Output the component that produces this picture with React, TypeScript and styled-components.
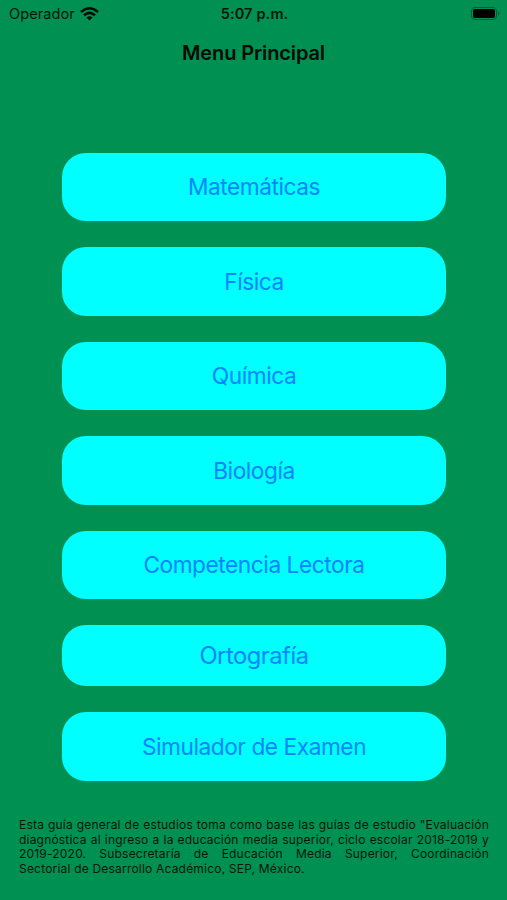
import React from "react";
import styled, { createGlobalStyle } from "styled-components";

const Global = createGlobalStyle`
  * { box-sizing: border-box; }
  body { margin: 0; background: #009051; font-family: Inter, sans-serif; }
`;
const Screen = styled.div`
  width: 507px; height: 900px; background: #009051; color: #00160b;
  display: flex; flex-direction: column; overflow: hidden;
`;
const StatusBar = styled.header`
  height: 27px; flex: none; padding: 0 7px 0 9px; display: grid;
  grid-template-columns: 1fr auto 1fr; align-items: center; font-size: 14.5px;
`;
const Carrier = styled.div`display: flex; align-items: center; gap: 5px; letter-spacing: 0.1px;`;
const Clock = styled.time`font-weight: 600; letter-spacing: 0.15px;`;
const Battery = styled.svg`justify-self: end;`;
const NavBar = styled.h1`
  margin: 0; height: 51px; flex: none; display: flex; align-items: center; justify-content: center;
  font-size: 20px; font-weight: 600; letter-spacing: -0.12px; color: #000b05;
`;
const Menu = styled.nav`
  margin-top: 74.5px; padding: 0 61px 0 62px; display: flex; flex-direction: column; gap: 26px;
`;
const MenuButton = styled.button<{ $height?: number; $size?: number }>`
  height: ${(p) => p.$height ?? 68.5}px; border: 0; border-radius: 24px; padding: 0;
  background: #00ffff; color: #0084ff; font-family: inherit;
  font-size: ${(p) => p.$size ?? 22.7}px; letter-spacing: -0.45px;
`;
const Note = styled.footer`
  margin: 37.5px 18px 0 19px; font-size: 12px; line-height: 14.5px; letter-spacing: 0.2px;
`;
const Line = styled.div<{ $last?: boolean }>`
  text-align: justify; text-align-last: ${(p) => (p.$last ? "left" : "justify")}; white-space: nowrap;
`;

const items = [
  { label: "Matemáticas" }, { label: "Física" }, { label: "Química" }, { label: "Biología" },
  { label: "Competencia Lectora" }, { label: "Ortografía", height: 61, size: 23.7 },
  { label: "Simulador de Examen" },
];
const note = [
  "Esta guía general de estudios toma como base las guías de estudio \"Evaluación",
  "diagnóstica al ingreso a la educación media superior, ciclo escolar 2018-2019 y",
  "2019-2020. Subsecretaría de Educación Media Superior, Coordinación",
  "Sectorial de Desarrollo Académico, SEP, México.",
];

export default function App() {
  return (
    <Screen>
      <Global />
      <StatusBar>
        <Carrier>Operador
          <svg width="19" height="14" viewBox="0 0 19 14" fill="none" stroke="#000b05" strokeWidth="2.5">
            <path d="M1 5Q9.5-2.5 18 5M4 8.2Q9.5 3.5 15 8.2" /><path d="M6.5 10.4Q9.5 8 12.5 10.4L9.5 13.5Z" fill="#000b05" stroke="none" />
          </svg>
        </Carrier>
        <Clock>5:07 p.m.</Clock>
        <Battery width="29" height="13" viewBox="0 0 29 13">
          <rect x=".5" y=".5" width="25" height="12" rx="3.5" fill="none" stroke="#005c34" />
          <rect x="2" y="2" width="22" height="9" rx="2" fill="#000" /><path d="M27 4.3Q29.6 6.5 27 8.7Z" fill="#005c34" />
        </Battery>
      </StatusBar>
      <NavBar>Menu Principal</NavBar>
      <Menu>
        {items.map((i) => <MenuButton key={i.label} $height={i.height} $size={i.size}>{i.label}</MenuButton>)}
      </Menu>
      <Note>{note.map((l, i) => <Line key={i} $last={i === 3}>{l}</Line>)}</Note>
    </Screen>
  );
}
